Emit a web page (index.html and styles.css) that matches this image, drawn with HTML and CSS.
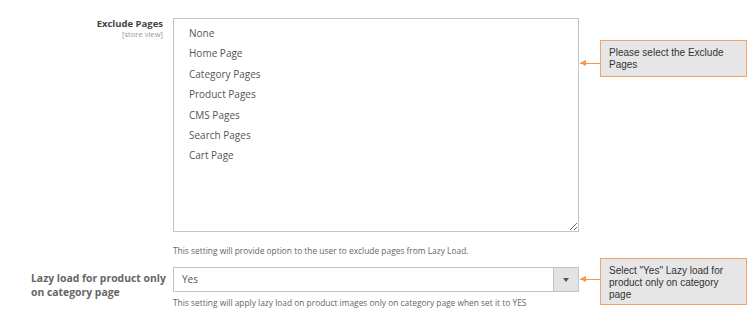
FILE: index.html
```html
<!DOCTYPE html>
<html lang="en">
<head>
  <meta charset="UTF-8">
  <title>Lazy Load Settings</title>
  <link rel="stylesheet" href="styles.css">
</head>
<body>

  <div class="config">
    <div class="row">
      <div class="label label-right">
        <span class="label-title">Exclude Pages</span>
        <span class="scope">[store view]</span>
      </div>
      <div class="control">
        <div class="multiselect">
          <div class="option">None</div>
          <div class="option">Home Page</div>
          <div class="option">Category Pages</div>
          <div class="option">Product Pages</div>
          <div class="option">CMS Pages</div>
          <div class="option">Search Pages</div>
          <div class="option">Cart Page</div>
        </div>
        <p class="note">This setting will provide option to the user to exclude pages from Lazy Load.</p>
      </div>
      <div class="callout callout-first">Please select the Exclude Pages</div>
    </div>

    <div class="row row-second">
      <div class="label label-left">
        <span class="label-big">Lazy load for product only on category page</span>
      </div>
      <div class="control">
        <div class="select">
          <span class="select-value">Yes</span>
          <span class="select-btn"><span class="caret"></span></span>
        </div>
        <p class="note note-tight">This setting will apply lazy load on product images only on category page when set it to YES</p>
      </div>
      <div class="callout callout-second">Select "Yes" Lazy load for product only on category page</div>
    </div>
  </div>

</body>
</html>
```

FILE: styles.css
```css
body {
  margin: 0;
  background: #fff;
  font-family: "Open Sans", Arial, sans-serif;
  color: #555;
}
.config {
  padding-top: 18px;
}
.row {
  display: flex;
  align-items: flex-start;
}
.row-second {
  margin-top: 11px;
}
.label {
  width: 168px;
  box-sizing: border-box;
  flex-shrink: 0;
}
.label-right {
  text-align: right;
  padding-right: 5px;
}
.label-left {
  text-align: left;
  padding-left: 31px;
  padding-top: 4px;
}
.label-title {
  display: block;
  font-size: 9.5px;
  line-height: 12px;
  font-weight: 700;
  color: #444;
}
.scope {
  display: block;
  font-size: 7.6px;
  line-height: 9px;
  color: #999;
}
.label-big {
  display: block;
  font-size: 10.4px;
  line-height: 14px;
  font-weight: 700;
  color: #666;
}
.control {
  width: 406px;
  margin-left: 5px;
  flex-shrink: 0;
}
.multiselect {
  height: 214px;
  box-sizing: border-box;
  border: 1px solid #c4c4c4;
  padding: 4px 15px;
  overflow: auto;
  resize: vertical;
}
.option {
  font-size: 10px;
  line-height: 20.4px;
  color: #555;
}
.note {
  margin: 14px 0 0;
  font-size: 8.4px;
  line-height: 10px;
  color: #666;
}
.note-tight {
  margin-top: 6px;
}
.select {
  display: flex;
  height: 25px;
  box-sizing: border-box;
  border: 1px solid #c4c4c4;
}
.select-value {
  flex: 1;
  padding-left: 8px;
  font-size: 10px;
  line-height: 23px;
  color: #555;
}
.select-btn {
  width: 24px;
  background: #e3e3e3;
  border-left: 1px solid #c4c4c4;
  display: flex;
  align-items: center;
  justify-content: center;
}
.caret {
  width: 0;
  height: 0;
  border-left: 3px solid transparent;
  border-right: 3px solid transparent;
  border-top: 4px solid #555;
}
.callout {
  position: relative;
  width: 147px;
  box-sizing: border-box;
  margin-left: 21px;
  padding: 6px 8px;
  background: #e6e6e6;
  border: 1px solid #f5a266;
  font-family: Arial, "Liberation Sans", sans-serif;
  font-size: 10px;
  line-height: 12px;
  color: #333;
}
.callout::before {
  content: "";
  position: absolute;
  left: -21px;
  width: 20px;
  height: 1px;
  background: #f79646;
}
.callout::after {
  content: "";
  position: absolute;
  left: -21px;
  width: 0;
  height: 0;
  border-top: 3px solid transparent;
  border-bottom: 3px solid transparent;
  border-right: 6px solid #f79646;
}
.callout-first {
  margin-top: 22px;
  height: 37px;
}
.callout-first::before {
  top: 22px;
}
.callout-first::after {
  top: 19px;
}
.callout-second {
  margin-top: -9px;
  height: 47px;
}
.callout-second::before {
  top: 20px;
}
.callout-second::after {
  top: 17px;
}
```
